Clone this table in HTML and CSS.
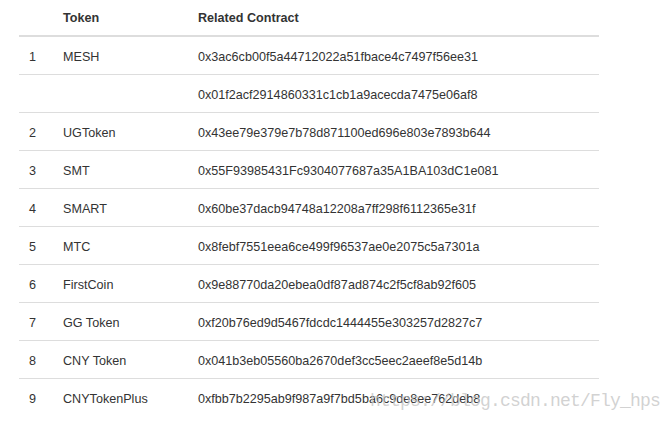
FILE: index.html
```html
<!DOCTYPE html>
<html>
<head>
<meta charset="utf-8">
<link rel="stylesheet" href="styles.css">
</head>
<body>
<div class="page">
  <table class="tokens">
    <thead>
      <tr><th class="c-num"></th><th class="c-name">Token</th><th>Related Contract</th></tr>
    </thead>
    <tbody>
      <tr><td>1</td><td>MESH</td><td>0x3ac6cb00f5a44712022a51fbace4c7497f56ee31</td></tr>
      <tr><td></td><td></td><td>0x01f2acf2914860331c1cb1a9acecda7475e06af8</td></tr>
      <tr><td>2</td><td>UGToken</td><td>0x43ee79e379e7b78d871100ed696e803e7893b644</td></tr>
      <tr><td>3</td><td>SMT</td><td>0x55F93985431Fc9304077687a35A1BA103dC1e081</td></tr>
      <tr><td>4</td><td>SMART</td><td>0x60be37dacb94748a12208a7ff298f6112365e31f</td></tr>
      <tr><td>5</td><td>MTC</td><td>0x8febf7551eea6ce499f96537ae0e2075c5a7301a</td></tr>
      <tr><td>6</td><td>FirstCoin</td><td>0x9e88770da20ebea0df87ad874c2f5cf8ab92f605</td></tr>
      <tr><td>7</td><td>GG Token</td><td>0xf20b76ed9d5467fdcdc1444455e303257d2827c7</td></tr>
      <tr><td>8</td><td>CNY Token</td><td>0x041b3eb05560ba2670def3cc5eec2aeef8e5d14b</td></tr>
      <tr class="last"><td>9</td><td>CNYTokenPlus</td><td>0xfbb7b2295ab9f987a9f7bd5ba6c9de8ee762deb8</td></tr>
    </tbody>
  </table>
  <div class="watermark">https://blog.csdn.net/Fly_hps</div>
</div>
</body>
</html>
```
FILE: styles.css
```css
html, body {
  margin: 0;
  padding: 0;
  background: #fff;
}
.page {
  position: relative;
  width: 672px;
  height: 422px;
  padding-left: 19px;
  box-sizing: border-box;
  overflow: hidden;
}
.tokens {
  width: 580px;
  border-collapse: collapse;
  font-family: "Liberation Sans", Arial, sans-serif;
  font-size: 12.6px;
  color: #333;
}
.tokens th {
  height: 35px;
  padding: 0 8px;
  text-align: left;
  font-weight: bold;
  vertical-align: middle;
  border-bottom: 2px solid #ddd;
}
.tokens th.c-num { width: 20px; }
.tokens th.c-name { width: 119px; }
.tokens td {
  height: 35px;
  padding: 2px 8px 0 10px;
  vertical-align: middle;
  border-bottom: 1px solid #ddd;
}
.tokens td:nth-child(2),
.tokens td:nth-child(3) { padding-left: 8px; }
.tokens tr.last td { border-bottom: none; }
.watermark {
  position: absolute;
  left: 370px;
  top: 391px;
  font-family: "Liberation Mono", "Courier New", monospace;
  font-size: 18px;
  letter-spacing: -0.8px;
  color: rgba(195, 195, 195, 0.75);
  white-space: nowrap;
}
```
